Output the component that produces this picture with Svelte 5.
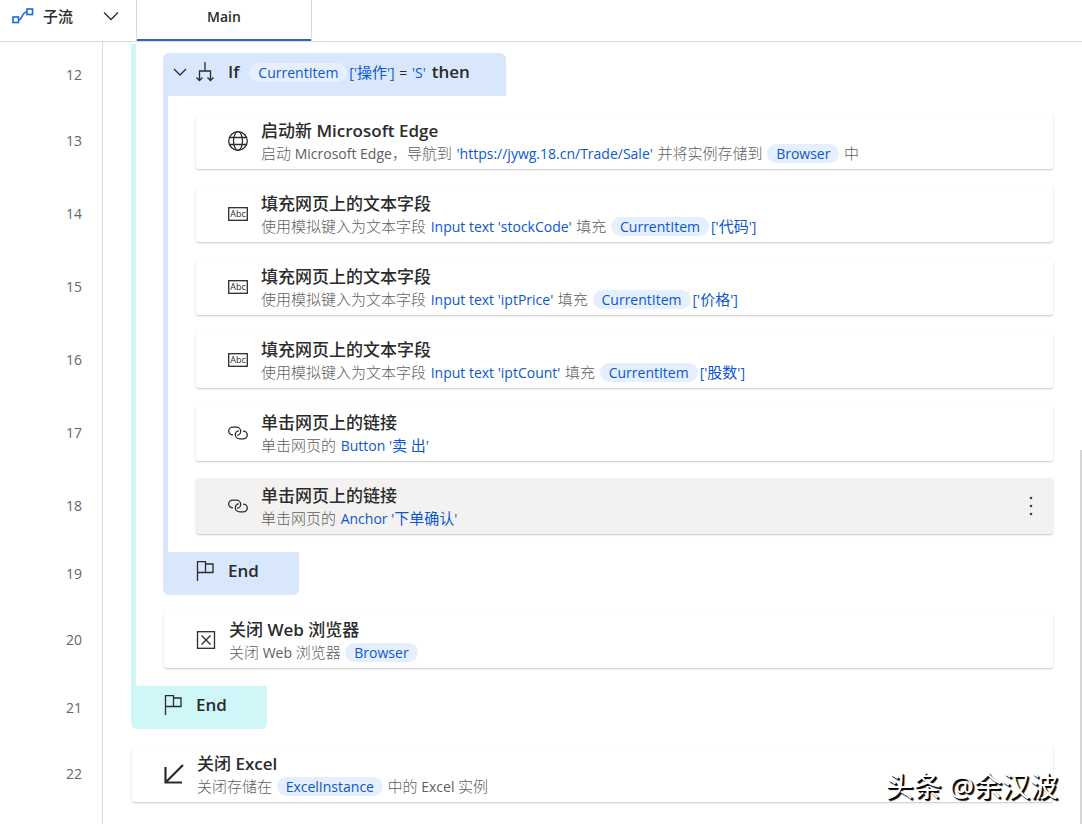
<script>
    const fillField = (name, column) => [
        { text: '使用模拟键入为文本字段 ' },
        { link: `Input text '${name}'` },
        { text: ' 填充 ' },
        { chip: 'CurrentItem' },
        { link: `['${column}']` },
    ];

    const rows = [
        {
            no: 12, kind: 'block', icon: 'branch', guides: ['cyan'], color: 'blue', open: true,
            parts: [
                { word: 'If' },
                { chip: 'CurrentItem' },
                { link: "['操作']" },
                { text: ' = ' },
                { link: "'S'" },
                { word: 'then' },
            ],
        },
        {
            no: 13, kind: 'card', icon: 'globe', guides: ['cyan', 'blue'], title: '启动新 Microsoft Edge',
            parts: [
                { text: '启动 Microsoft Edge，导航到 ' },
                { link: "'https://jywg.18.cn/Trade/Sale'" },
                { text: ' 并将实例存储到 ' },
                { chip: 'Browser' },
                { text: ' 中' },
            ],
        },
        { no: 14, kind: 'card', icon: 'abc', guides: ['cyan', 'blue'], title: '填充网页上的文本字段', parts: fillField('stockCode', '代码') },
        { no: 15, kind: 'card', icon: 'abc', guides: ['cyan', 'blue'], title: '填充网页上的文本字段', parts: fillField('iptPrice', '价格') },
        { no: 16, kind: 'card', icon: 'abc', guides: ['cyan', 'blue'], title: '填充网页上的文本字段', parts: fillField('iptCount', '股数') },
        {
            no: 17, kind: 'card', icon: 'link', guides: ['cyan', 'blue'], title: '单击网页上的链接',
            parts: [{ text: '单击网页的 ' }, { link: "Button '卖 出'" }],
        },
        {
            no: 18, kind: 'card', icon: 'link', guides: ['cyan', 'blue'], title: '单击网页上的链接',
            parts: [{ text: '单击网页的 ' }, { link: "Anchor '下单确认'" }],
        },
        { no: 19, kind: 'block', icon: 'flag', guides: ['cyan'], color: 'blue', parts: [{ word: 'End' }], tail: 'blue' },
        {
            no: 20, kind: 'card', icon: 'close', guides: ['cyan'], title: '关闭 Web 浏览器',
            parts: [{ text: '关闭 Web 浏览器 ' }, { chip: 'Browser' }],
        },
        { no: 21, kind: 'block', icon: 'flag', guides: [], color: 'cyan', parts: [{ word: 'End' }], tail: 'cyan' },
        {
            no: 22, kind: 'card', icon: 'arrow', guides: [], title: '关闭 Excel',
            parts: [{ text: '关闭存储在 ' }, { chip: 'ExcelInstance' }, { text: ' 中的 Excel 实例' }],
        },
    ];

    let selected = $state(18);

    // latin and chinese runs are set in slightly different sizes
    const runs = (text) => text.match(/[\u3000-\u9fff\uff00-\uffef]+|[^\u3000-\u9fff\uff00-\uffef]+/g);
    const isHan = (text) => /[\u3000-\u9fff\uff00-\uffef]/.test(text);
</script>

{#snippet mixed(text)}{#each runs(text) as run}<span class:han={isHan(run)}>{run}</span>{/each}{/snippet}

{#snippet line(parts)}
    {#each parts as part}{#if part.chip}<span class="chip">{part.chip}</span>{:else if part.link}<a href="#edit">{@render mixed(part.link)}</a>{:else if part.word}<strong>{part.word}</strong>{:else}{@render mixed(part.text)}{/if}{/each}
{/snippet}

{#snippet icon(name)}
    <svg class="icon" viewBox="0 0 20 20" aria-hidden="true">
        {#if name === 'branch'}
            <path d="M10 0v9M4.500 18V9h11v9M1.500 15.500l3 3 3-3M12.500 15.500l3 3 3-3" />
        {:else if name === 'globe'}
            <circle cx="10" cy="10" r="9.300" />
            <ellipse cx="10" cy="10" rx="4.500" ry="9.300" />
            <path d="M1.500 6.500h17M1.500 13.500h17" />
        {:else if name === 'abc'}
            <rect x=".7" y="3.700" width="18.600" height="12.600" />
            <text x="10" y="13.300" text-anchor="middle">Abc</text>
        {:else if name === 'link'}
            <path d="M5 11.800C2.500 11.800.7 10 .7 8S2.500 4.200 5 4.200h3.200c2.600 0 4.500 1.800 4.500 4s-1.600 4-3.600 4" />
            <path d="M15 8.200c2.500 0 4.300 1.800 4.300 3.800s-1.800 3.800-4.300 3.800h-3.200c-2.600 0-4.500-1.800-4.500-4s1.600-4 3.600-4" />
        {:else if name === 'flag'}
            <path d="M2.500 20V.7h8v10.800h-8M10.500 3h7.500v8.500H10.500" />
        {:else if name === 'close'}
            <rect x="1.500" y="1.700" width="17" height="16.600" />
            <path d="M5.500 5.500l9 9M14.500 5.500l-9 9" />
        {:else if name === 'arrow'}
            <path class="heavy" d="M19 1L2 18M1.500 3v15.500H18" />
        {/if}
    </svg>
{/snippet}

<header>
    <button class="subflows">
        <svg class="route" viewBox="0 0 22 16" aria-hidden="true">
            <rect x="1" y="9" width="5.500" height="5.500" />
            <rect x="15" y="1" width="5.500" height="5.500" />
            <path d="M6.500 12c4 0 3-8 8.500-8" />
        </svg>
        <span>子流</span>
        <svg class="chevron" viewBox="0 0 16 16" aria-hidden="true"><path d="M1 4.500l7 7 7-7" /></svg>
    </button>
    <button class="tab">Main</button>
</header>

<main>
    {#each rows as row (row.no)}
        <div class="row {row.kind}-row" class:first={row.open}>
            <span class="no">{row.no}</span>
            {#each row.guides as guide}
                <span class="guide {guide}"></span>
            {/each}
            {#if row.kind === 'block'}
                <div class="slot" class:tail={row.tail}>
                    {#if row.tail}<span class="stub {row.tail}"></span>{/if}
                    <div class="block {row.color}" class:open={row.open}>
                        {#if row.open}
                            <button class="fold" aria-label="折叠">
                                <svg viewBox="0 0 16 16"><path d="M2 5l6 6 6-6" /></svg>
                            </button>
                        {/if}
                        {@render icon(row.icon)}
                        <div class="line">{@render line(row.parts)}</div>
                    </div>
                </div>
            {:else}
                <!-- svelte-ignore a11y_click_events_have_key_events, a11y_no_static_element_interactions -->
                <div class="card" class:selected={selected === row.no} onclick={() => (selected = row.no)}>
                    {@render icon(row.icon)}
                    <div class="text">
                        <h3>{@render mixed(row.title)}</h3>
                        <div class="line">{@render line(row.parts)}</div>
                    </div>
                    {#if selected === row.no}
                        <button class="more" aria-label="更多">
                            <svg viewBox="0 0 4 20"><circle cx="2" cy="2" r="1.300" /><circle cx="2" cy="10" r="1.300" /><circle cx="2" cy="18" r="1.300" /></svg>
                        </button>
                    {/if}
                </div>
            {/if}
        </div>
    {/each}
    <span class="scrollbar"></span>
    <span class="watermark">头条 @余汉波</span>
</main>

<style>
    :global(body) {
        background: #fff;
        color: #2b2b2b;
        font-family: "Open Sans", "Noto Sans CJK SC", sans-serif;
        font-size: 14px;
    }
    button {
        padding: 0;
        border: none;
        background: none;
        color: inherit;
        font-family: inherit;
    }
    svg {
        fill: none;
        stroke: #2b2b2b;
        stroke-width: 1.3;
        flex: none;
    }
    a {
        margin: 0 1px;
        color: #0b57d0;
        text-decoration: none;
    }

    header {
        display: flex;
        height: 41px;
        border-bottom: 1px solid #dadada;
    }
    .subflows {
        display: flex;
        align-items: center;
        width: 136px;
        padding: 0 17px 10px 12px;
        box-sizing: border-box;
        font-size: 15px;
        font-weight: 500;
    }
    .subflows span {
        flex: 1;
        margin-left: 9px;
        text-align: left;
    }
    .route {
        width: 22px;
        height: 16px;
        stroke: #1a66e0;
        stroke-width: 1.6;
    }
    .chevron {
        width: 16px;
        height: 16px;
    }
    .tab {
        width: 176px;
        padding-bottom: 8px;
        border: 1px solid #dadada;
        border-width: 0 1px;
        box-shadow: inset 0 -2px #2b67d1;
        font-size: 14px;
        font-weight: 600;
    }

    main {
        position: relative;
        min-height: calc(100vh - 42px);
        padding: 2px 29px 0 0;
        box-sizing: border-box;
        background: linear-gradient(#dadada, #dadada) 102px 0 / 1px 100% no-repeat;
    }
    .row {
        display: flex;
    }
    .no {
        width: 82px;
        margin-right: 49px;
        color: #666;
        text-align: right;
    }
    .card-row .no {
        padding-top: 17px;
        line-height: 56px;
    }
    .block-row .no {
        padding-top: 18px;
        line-height: 43px;
    }
    .first .no {
        padding-top: 9px;
    }
    .guide {
        width: 5px;
        margin-right: 27px;
    }
    .cyan {
        background: #cff7f8;
    }
    .blue {
        background: #d9e7fd;
    }

    .slot {
        display: flex;
        flex-direction: column;
        align-items: flex-start;
        padding-top: 9px;
    }
    .slot.tail {
        padding-top: 0;
    }
    .stub {
        width: 5px;
        height: 18px;
    }
    .block {
        display: flex;
        align-items: center;
        gap: 13px;
        height: 43px;
        padding: 0 40px 5px 32px;
        box-sizing: border-box;
        border-radius: 0 0 6px 6px;
    }
    .block.open {
        padding: 0 36px 5px 9px;
        border-radius: 6px 6px 0 0;
    }
    .fold {
        display: flex;
        margin-right: -6px;
    }
    .fold svg {
        width: 16px;
        height: 16px;
    }
    strong {
        font-size: 17px;
        font-weight: 600;
    }
    .open strong:first-child {
        margin-right: 9px;
    }
    .open strong:last-child {
        margin-left: 5px;
    }
    .open .chip {
        background: #e6effd;
    }

    .card {
        display: flex;
        flex: 1;
        align-items: center;
        gap: 13px;
        min-height: 56px;
        margin: 17px 0 0 1px;
        padding: 0 20px 0 32px;
        box-sizing: border-box;
        border-radius: 3px;
        background: #fff;
        box-shadow: 0 1px 2px rgba(0, 0, 0, 0.22);
    }
    .card.selected {
        background: #f3f2f1;
    }
    .icon {
        width: 20px;
        height: 20px;
    }
    .icon .heavy {
        stroke-width: 2.2;
    }
    .icon text {
        fill: #2b2b2b;
        stroke: none;
        font-size: 9px;
    }
    .text {
        flex: 1;
        padding-top: 3px;
    }
    h3 {
        margin: 0;
        font-size: 17px;
        font-weight: 600;
        line-height: 22px;
    }
    h3 .han {
        font-weight: 500;
    }
    .line {
        color: #606060;
        line-height: 22px;
        white-space: nowrap;
    }
    .block .line {
        color: #2b2b2b;
    }
    .line .han {
        font-size: 15px;
        font-weight: 300;
    }
    .line a .han {
        font-weight: 400;
    }
    .chip {
        margin: 0 1px;
        padding: 0 9px;
        border-radius: 10px;
        background: #e5effd;
        color: #0b57d0;
    }
    .more {
        display: flex;
    }
    .more svg {
        width: 4px;
        height: 20px;
        fill: #444;
        stroke: none;
    }

    .scrollbar {
        position: absolute;
        top: 408px;
        right: 0;
        bottom: 0;
        width: 2px;
        background: #d6d6d6;
    }
    .watermark {
        position: absolute;
        right: 24px;
        bottom: 18px;
        color: #fff;
        font-size: 28px;
        line-height: 40px;
        text-shadow: 1px 1px 0 #000, 2px 2px 1px #000;
    }
</style>
